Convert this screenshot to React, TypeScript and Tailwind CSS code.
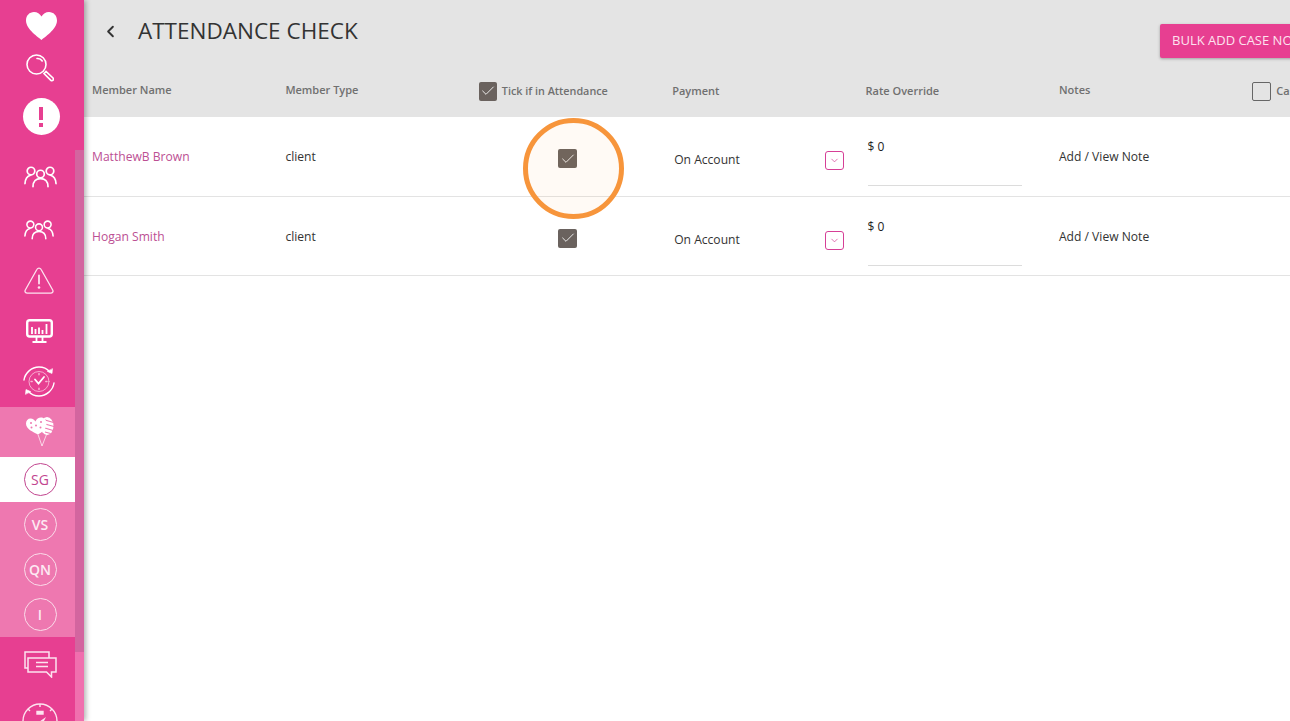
import React from 'react';
import { ChevronDown, ChevronLeft, Check } from 'lucide-react';

const People = ({ size = 33 }: { size?: number }) => (
  <svg width={size} height={size * 0.64} viewBox="0 0 33 21" fill="none" stroke="white" strokeWidth="1.700" strokeLinecap="round">
    <circle cx="7" cy="5" r="3.800" />
    <circle cx="16.500" cy="8" r="3.800" />
    <circle cx="26" cy="5" r="3.800" />
    <path d="M1 17.500c.2-4 2.300-7.500 5.500-8.300" />
    <path d="M32 17.500c-.2-4-2.300-7.500-5.500-8.300" />
    <path d="M9 20.500c0-5 3-8 7.500-8s7.500 3 7.500 8" />
  </svg>
);

const Heart = () => (
  <svg width="31" height="28" viewBox="0 0 31 28" fill="white">
    <path d="M15.500 28C13 25.500 0 17.500 0 8.500 0 3.500 3.500 0 8 0c3.200 0 6 1.800 7.500 4.500C17 1.800 19.800 0 23 0c4.500 0 8 3.500 8 8.500 0 9-13 17-15.500 19.500z" />
  </svg>
);

const Search = () => (
  <svg width="28" height="28" viewBox="0 0 28 28" fill="none" stroke="white" strokeWidth="1.600">
    <circle cx="10.500" cy="10.500" r="9.500" />
    <path d="M11 4.500c2.500-.3 4.300 1 5.200 2.500" strokeLinecap="round" />
    <path d="M18 19.500l2-2 7 6.500c.6.600.6 1.500 0 2.200s-1.500.7-2.100.1z" strokeWidth="1.700" />
  </svg>
);

const AlertDot = () => (
  <div className="flex h-[37px] w-[37px] flex-col items-center justify-center gap-[3px] rounded-full bg-white">
    <div className="h-[13px] w-[4px] bg-[#e73f91]" />
    <div className="h-[4px] w-[4px] bg-[#e73f91]" />
  </div>
);

const Warning = () => (
  <svg width="30" height="27" viewBox="0 0 30 27" fill="none" stroke="#fde3ef" strokeWidth="1.300" strokeLinejoin="round">
    <path d="M13 2.300L1.300 23c-.8 1.600.1 3.200 2 3.200h23.400c1.900 0 2.800-1.600 2-3.200L17 2.300c-.9-1.700-3.100-1.700-4 0z" />
    <path d="M15 8.500v8" strokeWidth="1.800" strokeLinecap="round" />
    <circle cx="15" cy="20.500" r="1.300" fill="#fde3ef" stroke="none" />
  </svg>
);

const Monitor = () => (
  <svg width="27" height="24" viewBox="0 0 27 24" fill="none" stroke="white">
    <rect x="1.200" y="1.200" width="24.600" height="16.300" rx="2.500" strokeWidth="2.400" />
    <path d="M6 15V8M9.500 15V10M13 15V8.500M16.500 15V11M20.500 15V5" strokeWidth="1.800" />
    <path d="M10.500 18v4M16.500 18v4M6.500 23h14" strokeWidth="1.800" />
  </svg>
);

const ClockCycle = () => (
  <svg width="32" height="31" viewBox="0 0 32 31" fill="none" stroke="white" strokeWidth="1.400" strokeLinecap="round">
    <path d="M1 14C2 7 8.500 1 16 1c4 0 8 1.600 10.500 4.500" />
    <path d="M31 17c-1 7-7.500 13-15 13-4 0-8-1.600-10.500-4.500" />
    <path d="M24.500 5.500l4.500 2 .5-4.500z" fill="white" strokeWidth="0.600" />
    <path d="M7.500 25.500L3 23.500 2.500 28z" fill="white" strokeWidth="0.600" />
    <circle cx="16" cy="15.500" r="10" stroke="#f9b6d6" strokeWidth="0.900" />
    <path d="M12 13.500l3.500 4 5.500-6.500" strokeWidth="1.800" />
    <path d="M16 7.500v1.200M16 22.300v1.200M8 15.500h1.200M22.800 15.500H24" stroke="#f9b6d6" />
  </svg>
);

const Balloons = () => (
  <svg width="28" height="30" viewBox="0 0 28 30" fill="none" stroke="white" strokeWidth="0.700">
    <ellipse cx="21" cy="9" rx="6.500" ry="9" fill="white" stroke="none" />
    <path d="M19 3l8.500 2.500M19 7l9 2.500M19 11l8 2.500M19 15l5.500 1.500" stroke="#ee78b0" strokeWidth="1.200" />
    <path d="M12 17.500C7 15 0 12 0 6.500 0 3.500 2 1.500 4.500 1.500 7 1.500 8.500 3 9.500 4.500 10.500 2 12.500.5 15 .5c3 0 5.500 2.500 5.500 6 0 5-4 8.500-8.500 11z" fill="white" stroke="none" />
    <circle cx="5" cy="6" r="1" fill="#ee78b0" stroke="none" />
    <circle cx="5.500" cy="10.500" r="1" fill="#ee78b0" stroke="none" />
    <circle cx="10" cy="8.500" r="1" fill="#ee78b0" stroke="none" />
    <circle cx="15" cy="5" r="1" fill="#ee78b0" stroke="none" />
    <circle cx="14.500" cy="10.500" r="1" fill="#ee78b0" stroke="none" />
    <path d="M12 17.500l4 11.500 4.500-11.500" />
  </svg>
);

const Chat = () => (
  <svg width="33" height="27" viewBox="0 0 33 27" fill="none" stroke="#fde3ef" strokeWidth="1.500">
    <path d="M4 17H1V1h24v6" />
    <path d="M4 7h28v14h-4.500v5l-5-5H4z" />
    <path d="M12 11.500h12M12 15.500h12" />
  </svg>
);

const Gauge = () => (
  <svg width="36" height="36" viewBox="0 0 36 36" fill="none" stroke="#fde3ef" strokeWidth="1.400">
    <circle cx="18" cy="18" r="17" />
    <path d="M18 1v3M6 6l2 2M30 6l-2 2" />
    <path d="M15 8.500h6v2.500h-6z" fill="#fde3ef" />
    <path d="M14 21l10-7-4 8z" fill="#fde3ef" stroke="none" />
  </svg>
);

const Initials = ({ label, active }: { label: string; active?: boolean }) => (
  <div className={active ? 'flex h-[45px] items-center justify-center bg-white pl-[5px]' : 'flex h-[45px] items-center justify-center pl-[5px]'}>
    <div
      className={
        active
          ? 'flex h-[33px] w-[33px] items-center justify-center rounded-full border border-[#c2458f] text-[14px] text-[#c2458f]'
          : 'flex h-[33px] w-[33px] items-center justify-center rounded-full border border-[#fbdcea] text-[14px] font-semibold text-[#fdeaf3]'
      }
    >
      {label}
    </div>
  </div>
);

const Sidebar = () => (
  <aside className="z-10 flex h-full w-[84px] shrink-0 bg-[#e73f91] shadow-[2px_0_5px_rgba(0,0,0,0.3)]">
    <div className="w-[75px] shrink-0 overflow-hidden">
      <div className="flex h-[51px] items-center justify-center pl-[7px]"><Heart /></div>
      <div className="flex h-[33px] items-center justify-center pl-[5px]"><Search /></div>
      <div className="flex h-[65px] items-center justify-center pl-[7px]"><AlertDot /></div>
      <div className="flex h-[56px] items-center justify-center pl-[5px]"><People /></div>
      <div className="flex h-[50px] items-center justify-center pl-[3px]"><People size={30} /></div>
      <div className="flex h-[50px] items-center justify-center pl-[3px]"><Warning /></div>
      <div className="flex h-[51px] items-center justify-center pl-[3px]"><Monitor /></div>
      <div className="flex h-[51px] items-center justify-center pl-[2px]"><ClockCycle /></div>
      <div className="flex h-[50px] items-center justify-center bg-[#ee78b0] pl-[4px]"><Balloons /></div>
      <Initials label="SG" active />
      <div className="bg-[#ee78b0]">
        <Initials label="VS" />
        <Initials label="QN" />
        <Initials label="I" />
      </div>
      <div className="flex h-[54px] items-center justify-center pl-[5px]"><Chat /></div>
      <div className="flex h-[30px] justify-center pt-[12px] pl-[4px]"><Gauge /></div>
    </div>
    <div className="flex w-[9px] shrink-0 flex-col">
      <div className="h-[150px] shrink-0" />
      <div className="h-[502px] shrink-0 bg-[#d3659f]" />
      <div className="flex-1 bg-[#f06fae]" />
    </div>
  </aside>
);

const columns = 'grid grid-cols-[repeat(7,193.4px)] pl-[8px]';

const Tick = ({ className }: { className: string }) => (
  <div className={`flex items-center justify-center rounded-[2px] bg-[#6a625e] ${className}`}>
    <Check size={16} strokeWidth={1.3} className="text-white" />
  </div>
);

const rows = [
  { name: 'MatthewB Brown', height: 'h-[80px]' },
  { name: 'Hogan Smith', height: 'h-[79px]' },
];

const Row = ({ name, height }: { name: string; height: string }) => (
  <div className={`${columns} ${height} border-b border-[#e3e3e3] text-[12.1px] text-[#333]`}>
    <div className="flex items-center pt-[2px] text-[#bc4f93]">{name}</div>
    <div className="flex items-center pt-[2px]">client</div>
    <div className="flex items-center justify-center pt-[4px] pr-[15px]">
      <Tick className="h-[19px] w-[19px]" />
    </div>
    <div className="flex items-center justify-between pl-[2px] pr-[22px] pt-[8px]">
      <span>On Account</span>
      <div className="flex h-[19px] w-[19px] items-center justify-center rounded-[3px] border-[1.5px] border-[#d63f96]">
        <ChevronDown size={11} strokeWidth={1.6} className="text-[#d63f96]" />
      </div>
    </div>
    <div className="pl-[2px] pt-[21px]">
      <div className="h-[48px] w-[154px] border-b border-[#dcdcdc] text-[12px] text-[#222]">$ 0</div>
    </div>
    <div className="flex items-center pt-[2px]">Add / View Note</div>
    <div />
  </div>
);

const App: React.FC = () => {
  return (
    <div className="relative flex h-[721px] w-[1290px] overflow-hidden bg-white font-['Open_Sans',sans-serif]">
      <Sidebar />
      <main className="min-w-0 flex-1">
        <div className="h-[117px] bg-[#e4e4e4]">
          {/* Title */}
          <div className="flex h-[79px]">
            <div className="flex w-[1076px] shrink-0 items-start pl-[17px] pt-[15px]">
              <ChevronLeft size={19} strokeWidth={2.4} className="mt-[7px] text-[#333]" />
              <h1 className="ml-[18px] text-[22.5px] leading-[32px] text-[#333]">ATTENDANCE CHECK</h1>
            </div>
            <div className="mt-[24px] flex h-[34px] shrink-0 items-center whitespace-nowrap rounded-[2px] bg-[#e73f91] px-[12px] text-[13px] text-[#fde3ef] shadow-[0_1px_3px_rgba(0,0,0,0.3)]">
              BULK ADD CASE NOTES
            </div>
          </div>
          {/* Column headers */}
          <div className={`${columns} text-[11px] font-semibold text-[#707070]`}>
            <div className="pt-[3px]">Member Name</div>
            <div className="pt-[3px]">Member Type</div>
            <div className="flex h-[24px] items-center gap-[5px]">
              <Tick className="h-[19px] w-[18px]" />
              <span className="text-[10.8px]">Tick if in Attendance</span>
            </div>
            <div className="pt-[4px]">Payment</div>
            <div className="pt-[4px]">Rate Override</div>
            <div className="pt-[3px]">Notes</div>
            <div className="flex h-[24px] items-center gap-[5px]">
              <div className="h-[19px] w-[19px] shrink-0 rounded-[2px] border border-[#666]" />
              <span className="whitespace-nowrap">Case Notes</span>
            </div>
          </div>
        </div>
        {rows.map((row) => (
          <Row key={row.name} name={row.name} height={row.height} />
        ))}
      </main>
      {/* Click highlight */}
      <div className="absolute left-[523px] top-[118px] flex h-[101px] w-[101px] rounded-full border-[5px] border-[#f7953b] bg-[#f7953b]/5" />
    </div>
  );
};

export default App;
